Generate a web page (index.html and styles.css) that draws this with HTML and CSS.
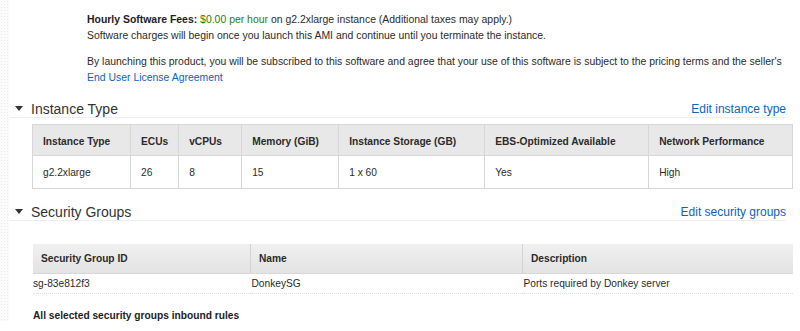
FILE: index.html
```html
<!DOCTYPE html>
<html lang="en">
<head>
    <meta charset="UTF-8">
    <meta name="viewport" content="width=device-width, initial-scale=1.0">
    <title>Review Instance Launch</title>
    <link rel="stylesheet" href="styles.css">
</head>
<body>
    <div class="edge"></div>
    <main class="page">
        <div class="fees">
            <p>
                <b>Hourly Software Fees:</b> <span class="price">$0.00 per hour</span> on g2.2xlarge instance (Additional taxes may apply.)<br>
                Software charges will begin once you launch this AMI and continue until you terminate the instance.
            </p>
            <p>
                By launching this product, you will be subscribed to this software and agree that your use of this software is subject to the pricing terms and the seller's<br>
                <a href="#">End User License Agreement</a>
            </p>
        </div>

        <section class="section">
            <div class="section-head">
                <span class="caret"></span>
                <h2>Instance Type</h2>
                <a href="#" class="edit">Edit instance type</a>
            </div>
            <table class="grid">
                <thead>
                    <tr>
                        <th class="c-type">Instance Type</th>
                        <th class="c-ecu">ECUs</th>
                        <th class="c-vcpu">vCPUs</th>
                        <th class="c-mem">Memory (GiB)</th>
                        <th class="c-store">Instance Storage (GB)</th>
                        <th class="c-ebs">EBS-Optimized Available</th>
                        <th>Network Performance</th>
                    </tr>
                </thead>
                <tbody>
                    <tr>
                        <td>g2.2xlarge</td>
                        <td>26</td>
                        <td>8</td>
                        <td>15</td>
                        <td>1 x 60</td>
                        <td>Yes</td>
                        <td>High</td>
                    </tr>
                </tbody>
            </table>
        </section>

        <section class="section">
            <div class="section-head">
                <span class="caret"></span>
                <h2>Security Groups</h2>
                <a href="#" class="edit">Edit security groups</a>
            </div>
            <table class="list">
                <thead>
                    <tr>
                        <th class="c-id">Security Group ID</th>
                        <th class="c-name">Name</th>
                        <th>Description</th>
                    </tr>
                </thead>
                <tbody>
                    <tr>
                        <td>sg-83e812f3</td>
                        <td>DonkeySG</td>
                        <td>Ports required by Donkey server</td>
                    </tr>
                </tbody>
            </table>
            <p class="rules">All selected security groups inbound rules</p>
        </section>
    </main>
</body>
</html>
```

FILE: styles.css
```css
html, body {
    margin: 0;
    padding: 0;
    background: #fff;
    font-family: 'Liberation Sans', Arial, sans-serif;
    color: #2b2b2b;
}
body {
    display: flex;
}
.edge {
    width: 9px;
    flex: none;
    background-color: #fbfbfb;
    background-image: radial-gradient(#ececec 0.6px, transparent 0.8px);
    background-size: 3px 3px;
}
.page {
    flex: 1;
    padding: 0 7px 0 1px;
}
a {
    color: #0b63c4;
    text-decoration: none;
}

/* Fees */
.fees {
    padding: 12px 0 0 77px;
    font-size: 10.45px;
    line-height: 16px;
}
.fees p {
    margin: 0 0 10px;
}
.fees b {
    color: #222;
}
.price {
    color: #1d8102;
}

/* Sections */
.section-head {
    display: flex;
    align-items: center;
    height: 17px;
    margin: 14px 7px 0 0;
    border-bottom: 1px solid #eee;
}
.caret {
    width: 0;
    height: 0;
    margin: 0 8px 0 5px;
    border-left: 4px solid transparent;
    border-right: 4px solid transparent;
    border-top: 5px solid #333;
}
.section-head h2 {
    margin: 0;
    flex: 1;
    font-size: 14px;
    font-weight: normal;
    color: #333;
}
.edit {
    font-size: 12px;
}

/* Instance table */
.grid {
    margin: 6px 0 0 22px;
    width: 761px;
    border-collapse: collapse;
    font-size: 10.2px;
    text-align: left;
}
.grid th, .grid td {
    border: 1px solid #d6d6d6;
    padding: 0 10px;
}
.grid th {
    height: 27px;
    padding-top: 3px;
    background: #e8e8e8;
    font-weight: bold;
    color: #2b2b2b;
}
.grid td {
    height: 32px;
}
.c-type { width: 77px; }
.c-ecu { width: 26px; }
.c-vcpu { width: 42px; }
.c-mem { width: 76px; }
.c-store { width: 125px; }
.c-ebs { width: 143px; }

/* Security groups table */
.list {
    margin: 23px 0 0 23px;
    width: 760px;
    border-collapse: collapse;
    font-size: 10.2px;
    text-align: left;
}
.list th {
    height: 29px;
    padding: 0 0 0 8px;
    background: linear-gradient(#f0f0f0, #e3e3e3);
    border-bottom: 1px solid #d8d8d8;
    font-weight: bold;
    color: #2b2b2b;
}
.list th + th {
    border-left: 1px solid #d2d2d2;
}
.list td {
    height: 19px;
    padding: 0;
    border-bottom: 1px dotted #ddd;
}
.list td + td {
    padding-left: 1px;
}
.c-id { width: 209px; }
.c-name { width: 263px; }
.rules {
    margin: 16px 0 0 23px;
    font-size: 10.2px;
    font-weight: bold;
    color: #222;
}
```
